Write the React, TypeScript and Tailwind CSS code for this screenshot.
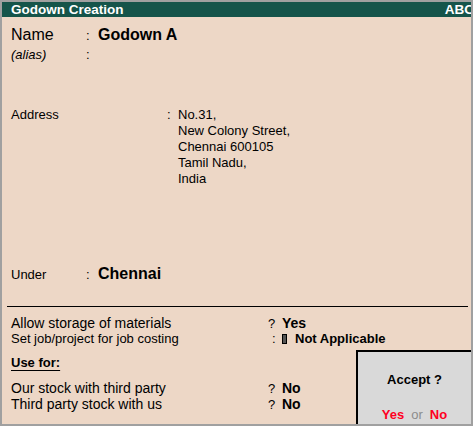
import React from "react";

// Tally-style "Godown Creation" voucher screen
const QRow: React.FC<{ label: string; mark: string; value: string; size?: string }> = ({
  label,
  mark,
  value,
  size = "text-[14px]",
}) => (
  <div className={`flex h-[16px] items-baseline pl-[9px] leading-[16px] ${size}`}>
    <span className="w-[257px]">{label}</span>
    <span className="w-[14px] text-[13px]">{mark}</span>
    <span className="font-bold">{value}</span>
  </div>
);

const App: React.FC = () => {
  const address = ["No.31,", "New Colony Street,", "Chennai 600105", "Tamil Nadu,", "India"];

  return (
    <div
      className="relative h-[426px] w-[473px] overflow-hidden border-2 border-[#a0a0a0] bg-[#edd7c6] text-black"
      style={{ fontFamily: '"Liberation Sans", Arial, sans-serif' }}
    >
      {/* title bar */}
      <div className="flex h-[15px] items-center justify-between bg-[#15544a] pl-[9px] text-[13.5px] font-bold leading-[15px] text-white">
        <span>Godown Creation</span>
        <span className="mr-[-3px]">ABC</span>
      </div>

      {/* name + alias */}
      <div className="mt-[9px] flex h-[18px] items-baseline pl-[9px] text-[16px] leading-[18px]">
        <span className="w-[75px]">Name</span>
        <span className="w-[12px] text-[13px]">:</span>
        <span className="font-bold">Godown A</span>
      </div>
      <div className="mt-[3px] flex h-[16px] items-baseline pl-[9px] text-[13px] leading-[16px]">
        <span className="w-[75px] italic">(alias)</span>
        <span>:</span>
      </div>

      {/* address */}
      <div className="mt-[44px] flex pl-[9px] text-[13px] leading-[16px]">
        <span className="w-[156px]">Address</span>
        <span className="w-[11px]">:</span>
        <div className="flex flex-col">
          {address.map((line) => (
            <span key={line}>{line}</span>
          ))}
        </div>
      </div>

      {/* under */}
      <div className="mt-[78px] flex h-[18px] items-baseline pl-[9px] leading-[18px]">
        <span className="w-[75px] text-[13px]">Under</span>
        <span className="w-[12px] text-[13px]">:</span>
        <span className="text-[16px] font-bold">Chennai</span>
      </div>

      <div className="mt-[23px] ml-[5px] mr-[3px] h-px bg-black" />

      {/* options */}
      <div className="mt-[8px]">
        <QRow label="Allow storage of materials" mark="?" value="Yes" />
        <div className="flex h-[16px] items-baseline pl-[9px] text-[13px] leading-[16px]">
          <span className="w-[257px]">Set job/project for job costing</span>
          <span className="w-[14px] pl-[4px]">:</span>
          <span className="mr-[8px] inline-block h-[10px] w-[5px] self-center border-[1.5px] border-black bg-[#555]" />
          <span className="font-bold">Not Applicable</span>
        </div>
        <div className="mt-[8px] h-[16px] pl-[9px] text-[13px] font-bold leading-[16px]">
          <span className="underline decoration-1 underline-offset-[3px]">Use for:</span>
        </div>
        <div className="mt-[9px]">
          <QRow label="Our stock with third party" mark="?" value="No" />
          <QRow label="Third party stock with us" mark="?" value="No" />
        </div>
      </div>

      {/* accept box */}
      <div className="absolute bottom-0 left-[354px] right-0 top-[348px] flex flex-col items-center border-l-2 border-t-2 border-black bg-[#d9d9d9] pt-[20px] text-[13px] leading-[16px]">
        <span className="font-bold">Accept ?</span>
        <div className="mt-[19px] flex gap-[7px]">
          <span className="font-bold text-[#ff0022]">Yes</span>
          <span className="text-[#8c8c8c]">or</span>
          <span className="font-bold text-[#ff0022]">No</span>
        </div>
      </div>
    </div>
  );
};

export default App;
